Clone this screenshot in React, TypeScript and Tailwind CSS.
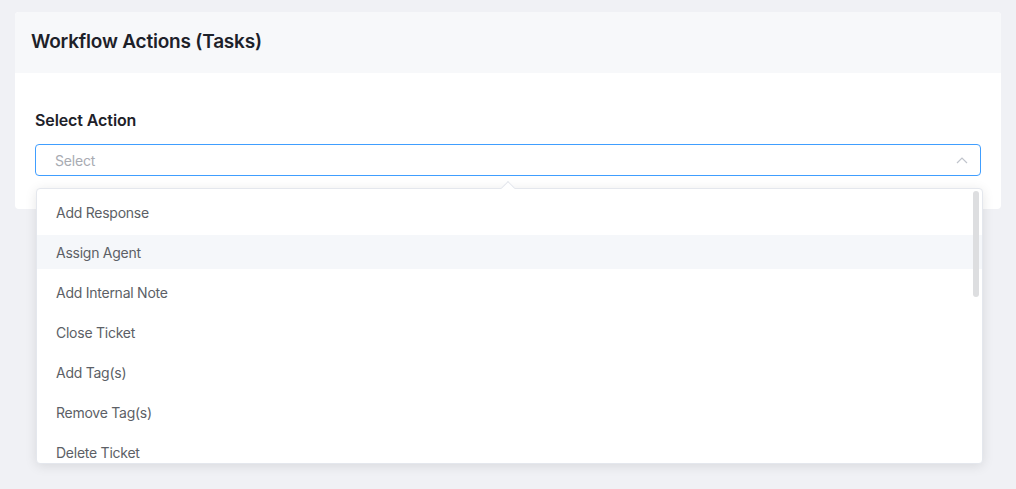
const actions = [
  "Add Response",
  "Assign Agent",
  "Add Internal Note",
  "Close Ticket",
  "Add Tag(s)",
  "Remove Tag(s)",
  "Delete Ticket",
]

export default function App() {
  return (
    <div className="min-h-[489px] bg-[#f0f1f5] px-[15px] pt-3 font-['Inter',sans-serif]">
      <div className="rounded bg-white">
        {/* Header */}
        <div className="flex h-[61px] items-center rounded-t bg-[#f7f8fa] px-4">
          <h2 className="text-[19px] font-semibold tracking-[-0.2px] text-[#1d2129]">Workflow Actions (Tasks)</h2>
        </div>

        {/* Body */}
        <div className="px-5 pt-[37px] pb-[33px]">
          <label className="mb-[14px] block text-[16px] font-semibold leading-5 tracking-[-0.1px] text-[#1d2129]">Select Action</label>
          <div className="relative">
            <div className="flex h-[32px] items-center justify-between rounded border border-[#409eff] bg-white pl-[19px] pr-[12px]">
              <span className="text-[14px] tracking-[-0.2px] text-[#a8abb2]">Select</span>
              <svg width="12" height="7" viewBox="0 0 12 7" fill="none" className="text-[#c0c4cc]">
                <path d="M1 6 L6 1 L11 6" stroke="currentColor" strokeWidth="1.2" />
              </svg>
            </div>

            {/* Dropdown */}
            <div className="absolute left-px right-[-2px] top-[44px] z-10 rounded border border-[#e4e7ed] bg-white shadow-[0_2px_12px_rgba(0,0,0,0.1)]">
              <div className="absolute -top-[6px] left-[466px] h-[10px] w-[10px] rotate-45 border-l border-t border-[#e4e7ed] bg-white" />
              <div className="relative h-[274px] overflow-hidden rounded">
                <ul className="flex flex-col gap-[6px] pt-[6px]">
                  {actions.map((a) => (
                    <li
                      key={a}
                      className={`flex h-[34px] items-center px-[19px] text-[14px] tracking-[-0.25px] text-[#5c5f66] ${
                        a === "Assign Agent" ? "bg-[#f5f7fa]" : ""
                      }`}
                    >
                      {a}
                    </li>
                  ))}
                </ul>
                <div className="absolute right-[3px] top-[2px] h-[106px] w-[6px] rounded-full bg-[#dddee0]" />
              </div>
            </div>
          </div>
        </div>
      </div>
    </div>
  )
}
